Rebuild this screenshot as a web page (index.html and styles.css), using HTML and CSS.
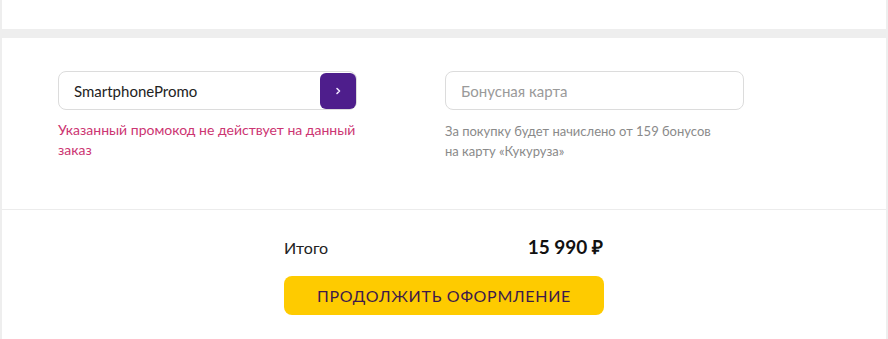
FILE: index.html
```html
<!DOCTYPE html>
<html lang="ru">
<head>
    <meta charset="UTF-8">
    <meta name="viewport" content="width=device-width, initial-scale=1.0">
    <title>Оформление заказа</title>
    <link rel="stylesheet" href="styles.css">
</head>
<body>
    <div class="card card-top"></div>
    <div class="card">
        <div class="codes">
            <div class="field">
                <div class="input-wrap">
                    <input class="input" type="text" value="SmartphonePromo">
                    <button class="apply" aria-label="Применить">
                        <svg width="8" height="8" viewBox="0 0 8 8"><path d="M3 1.5 L5.5 4 L3 6.5" fill="none" stroke="#f0e6ff" stroke-width="1.6" stroke-linecap="round" stroke-linejoin="round"/></svg>
                    </button>
                </div>
                <div class="error">Указанный промокод не действует на данный заказ</div>
            </div>
            <div class="field">
                <div class="input-wrap">
                    <input class="input" type="text" placeholder="Бонусная карта">
                </div>
                <div class="hint">За покупку будет начислено от 159 бонусов<br>на карту «Кукуруза»</div>
            </div>
        </div>
        <div class="summary">
            <div class="total">
                <span class="total-label">Итого</span>
                <span class="total-sum">15 990 ₽</span>
            </div>
            <button class="checkout">ПРОДОЛЖИТЬ ОФОРМЛЕНИЕ</button>
        </div>
    </div>
</body>
</html>
```

FILE: styles.css
```css
body {
    margin: 0;
    padding: 0 2px;
    background-color: #eeeeee;
    font-family: 'Lato', 'Open Sans', sans-serif;
    color: #222;
}

.card {
    background-color: #fff;
}

.card-top {
    height: 29px;
    margin-bottom: 9px;
}

.codes {
    display: flex;
    gap: 88px;
    padding: 33px 56px 0;
    height: 138px;
    border-bottom: 1px solid #ececec;
}

.field {
    width: 299px;
}

.input-wrap {
    position: relative;
    height: 39px;
}

.input {
    box-sizing: border-box;
    width: 100%;
    height: 39px;
    padding: 0 50px 0 15px;
    border: 1px solid #dcdcdc;
    border-radius: 8px;
    font-family: inherit;
    font-size: 15px;
    color: #222;
    outline: none;
}

.input::placeholder {
    color: #9a9a9a;
}

.apply {
    position: absolute;
    top: 2px;
    right: 1px;
    width: 36px;
    height: 36px;
    border: none;
    border-radius: 6px;
    background-color: #4e1e8c;
    display: flex;
    justify-content: center;
    align-items: center;
    padding: 0;
    cursor: pointer;
}

.error {
    margin-top: 10px;
    font-size: 14px;
    line-height: 20px;
    color: #cc3572;
}

.hint {
    margin-top: 11px;
    font-size: 13px;
    line-height: 20px;
    color: #8a8a8a;
}

.summary {
    width: 320px;
    margin: 0 auto;
    padding: 24px 0 0;
    height: 106px;
}

.total {
    display: flex;
    justify-content: space-between;
    align-items: baseline;
    padding-right: 1px;
}

.total-label {
    font-size: 16px;
    color: #222;
}

.total-sum {
    font-size: 19px;
    font-weight: 700;
    color: #111;
}

.checkout {
    margin-top: 16px;
    width: 320px;
    height: 39px;
    border: none;
    border-radius: 8px;
    background-color: #fecb00;
    color: #3d1a4a;
    font-family: inherit;
    font-size: 16px;
    letter-spacing: 0.7px;
    cursor: pointer;
}
```
